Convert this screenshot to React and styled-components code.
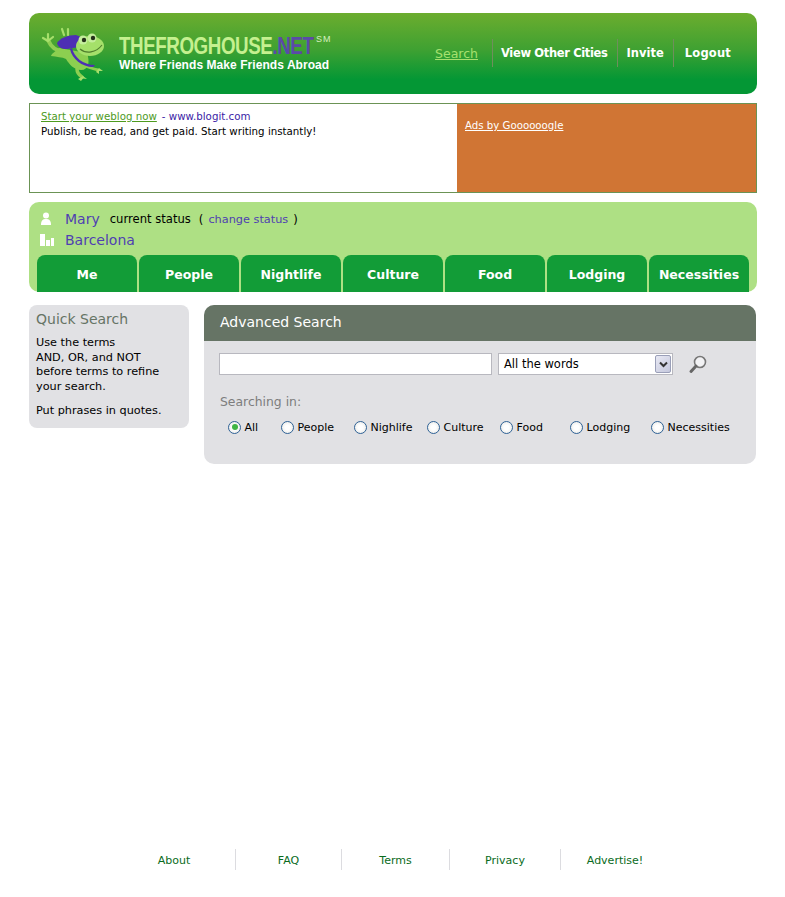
import React from 'react'
import styled, { createGlobalStyle } from 'styled-components'

const GlobalStyle = createGlobalStyle`
  html, body {
    margin: 0;
    padding: 0;
    background: #fff;
    font-family: "DejaVu Sans", Verdana, sans-serif;
    font-size: 11px;
    color: #000;
  }
  a { color: inherit; }
`

const Page = styled.div`
  width: 728px;
  height: 897px;
  margin-left: 29px;
  padding-top: 13px;
  box-sizing: border-box;
  display: flex;
  flex-direction: column;
`

const Header = styled.header`
  height: 81px;
  border-radius: 10px;
  background: linear-gradient(#6cad2e 0%, #3fa132 45%, #049735 82%, #049735 100%);
  display: flex;
  align-items: flex-start;
  justify-content: space-between;
`

const Brand = styled.div`
  display: flex;
  padding: 13px 0 0 12px;
`

const BrandText = styled.div`
  margin: 8px 0 0 10px;
`

const BrandName = styled.div`
  display: flex;
  align-items: flex-start;
  height: 24px;
`

const BrandWord = styled.div`
  width: 194px;
  font-family: "Liberation Sans", Arial, sans-serif;
  font-weight: bold;
  font-size: 23px;
  line-height: 24px;
  letter-spacing: -0.5px;
  color: #c5f08f;
  white-space: nowrap;
  transform: scaleX(0.815);
  transform-origin: left center;
`

const NetPart = styled.span`
  color: #5b4aa8;
`

const Sm = styled.sup`
  font-family: "Liberation Sans", Arial, sans-serif;
  font-weight: normal;
  font-size: 9px;
  line-height: 9px;
  letter-spacing: 1px;
  margin: 1px 0 0 3px;
  color: #d6efc0;
`

const Tagline = styled.div`
  font-family: "Liberation Sans", Arial, sans-serif;
  font-weight: bold;
  font-size: 12px;
  line-height: 14px;
  letter-spacing: 0.06px;
  color: #fff;
`

const TopNav = styled.nav`
  display: flex;
  align-items: center;
  margin: 26px 26px 0 0;
  height: 28px;
`

const TopLink = styled.a`
  height: 28px;
  line-height: 29px;
  font-size: ${p => (p.$active ? '12.5px' : '11.5px')};
  font-weight: ${p => (p.$active ? 'normal' : 'bold')};
  letter-spacing: ${p => p.$ls || 0}px;
  padding: 0 ${p => p.$pr}px 0 ${p => p.$pl}px;
  color: ${p => (p.$active ? '#a6e06f' : '#fff')};
  text-decoration: ${p => (p.$active ? 'underline' : 'none')};
  border-right: ${p => (p.$last ? 'none' : '1px solid #6f8f5c')};
  white-space: nowrap;
`

const AdBox = styled.section`
  margin-top: 9px;
  height: 90px;
  box-sizing: border-box;
  border: 1px solid #6b9355;
  display: flex;
`

const AdText = styled.div`
  width: 427px;
  padding: 5px 0 0 11px;
  box-sizing: border-box;
  line-height: 15px;
  font-size: 10.25px;
`

const AdLink = styled.a`
  color: #4d9a1e;
  text-decoration: underline;
`

const AdUrl = styled.span`
  color: #3a1ca6;
  margin-left: 5px;
`

const AdSide = styled.div`
  flex: 1;
  background: #d07534;
  padding: 14px 0 0 8px;
  font-size: 10.2px;
  line-height: 15px;
  color: #fff;
`

const UserPanel = styled.section`
  margin-top: 9px;
  height: 90px;
  background: #aee084;
  border-radius: 10px;
  box-sizing: border-box;
  padding-top: 6px;
  display: flex;
  flex-direction: column;
`

const UserRow = styled.div`
  height: 21px;
  display: flex;
  align-items: center;
  padding-left: 11px;
  font-size: 11.6px;
`

const RowIcon = styled.svg`
  width: 14px;
  height: 14px;
  margin-right: 11px;
  fill: #fff;
  flex: none;
`

const UserName = styled.a`
  font-size: 14px;
  color: #4f3fb2;
  text-decoration: none;
`

const StatusText = styled.span`
  margin-left: ${p => p.$gap}px;
`

const StatusLink = styled.a`
  color: #4f3fb2;
  font-size: 11.3px;
  text-decoration: none;
  margin: 0 5px;
`

const Tabs = styled.div`
  margin: 5px 0 0 8px;
  display: flex;
  gap: 2px;
`

const Tab = styled.a`
  width: 100px;
  height: 37px;
  background: #129c37;
  border-radius: 8px 8px 0 0;
  color: #fff;
  font-size: 12.5px;
  font-weight: bold;
  text-align: center;
  line-height: 39px;
  text-decoration: none;
  white-space: nowrap;
`

const Columns = styled.div`
  margin-top: 13px;
  display: flex;
  align-items: flex-start;
`

const Sidebar = styled.aside`
  width: 160px;
  height: 123px;
  background: #e1e1e4;
  border-radius: 8px;
  box-sizing: border-box;
  padding: 5px 0 0 7px;
  margin-right: 15px;
`

const SideTitle = styled.h3`
  margin: 0 0 8px;
  font-size: 14px;
  line-height: 18px;
  font-weight: normal;
  color: #667465;
`

const SideText = styled.p`
  margin: 0 0 10px;
  font-size: 11.25px;
  line-height: 14.5px;
`

const Main = styled.main`
  width: 552px;
  height: 159px;
  background: #e1e1e4;
  border-radius: 10px;
  overflow: hidden;
`

const MainTitle = styled.h2`
  margin: 0;
  height: 36px;
  background: #667465;
  color: #fff;
  font-size: 14px;
  font-weight: normal;
  line-height: 34px;
  padding-left: 16px;
`

const SearchRow = styled.div`
  display: flex;
  align-items: center;
  padding: 12px 0 0 15px;
`

const SearchInput = styled.input`
  width: 273px;
  height: 22px;
  box-sizing: border-box;
  border: 1px solid #b8b8bf;
  background: #fff;
  margin: 0;
  padding: 0 4px;
`

const SelectBox = styled.div`
  position: relative;
  width: 175px;
  height: 22px;
  box-sizing: border-box;
  margin-left: 6px;
  border: 1px solid #b8b8bf;
  background: #fff;
  padding-left: 5px;
  font-size: 11.5px;
  line-height: 20px;
`

const SelectArrow = styled.div`
  position: absolute;
  top: 1px;
  right: 1px;
  width: 16px;
  height: 18px;
  box-sizing: border-box;
  border: 1px solid #9a9fb8;
  border-radius: 2px;
  background: linear-gradient(135deg, #e8e9f4, #c4c7dc);
  display: flex;
  align-items: center;
  justify-content: center;
`

const SearchIcon = styled.svg`
  width: 20px;
  height: 20px;
  margin-left: 15px;
`

const SearchingIn = styled.div`
  margin: 19px 0 0 16px;
  font-size: 12.4px;
  line-height: 16px;
  color: #7d7d7d;
`

const RadioRow = styled.div`
  display: flex;
  margin: 9px 0 0 24px;
`

const RadioItem = styled.label`
  width: ${p => p.$w}px;
  height: 16px;
  display: flex;
  align-items: center;
  font-size: 11px;
  white-space: nowrap;
  flex: none;
`

const RadioMark = styled.span`
  width: 13px;
  height: 13px;
  flex: none;
  box-sizing: border-box;
  margin-right: 3.5px;
  border: 1.5px solid #2f6296;
  border-radius: 50%;
  background: radial-gradient(circle at 50% 50%, #fff 30%, #e4e4e0 100%);
  display: flex;
  align-items: center;
  justify-content: center;
  &::after {
    content: '';
    display: ${p => (p.$on ? 'block' : 'none')};
    width: 6px;
    height: 6px;
    border-radius: 50%;
    background: #3fb544;
  }
`

const Footer = styled.footer`
  margin: 385px 0 0 84px;
  display: flex;
  height: 21px;
`

const FootLink = styled.a`
  width: ${p => p.$w}px;
  line-height: 24px;
  text-align: center;
  font-size: 11px;
  color: #0a6b1c;
  text-decoration: none;
  border-right: ${p => (p.$last ? 'none' : '1px solid #dcdce0')};
  flex: none;
`

const Frog = () => (
  <svg width="68" height="60" viewBox="0 0 68 60">
    {/* waving arm */}
    <path d="M22 25 C15 25 10 21 7 14" stroke="#8fce52" strokeWidth="4" fill="none" strokeLinecap="round" />
    <path d="M7 15 L2 12 M7 14 L7 8 M7 15 L12 11" stroke="#a7df6b" strokeWidth="2.2" strokeLinecap="round" />
    {/* body and legs */}
    <path d="M18 22 C14 26 11 27 10 30 C16 31 21 31 25 33 C28 38 33 44 40 44 C48 44 49 36 46 27 Z" fill="#8ccf50" />
    <path d="M36 43 C36 47 38 49 41 51" stroke="#8ccf50" strokeWidth="3.5" fill="none" strokeLinecap="round" />
    <path d="M37 53 L42 50 L46 53 L42 52.5 L40 55 Z" fill="#a7df6b" />
    <path d="M45 40 C49 42 53 43 57 44" stroke="#8ccf50" strokeWidth="3" fill="none" strokeLinecap="round" />
    <path d="M55 46 L58 42 L62 45 L58 45 L58 48 Z" fill="#a7df6b" />
    {/* strap */}
    <path d="M31 22 C33 31 42 39 54 39 L52 41 C41 41 31 33 29 23 Z" fill="#4d2fb4" />
    {/* backpack */}
    <path d="M16 17 C19 12 27 9 35 9 L40 11 L38 21 L26 23 C20 23 17 21 16 17 Z" fill="#4d2fb4" />
    <path d="M21 3 L23 9 M27 3 L27 9" stroke="#a7df6b" strokeWidth="2.2" strokeLinecap="round" />
    {/* head */}
    <ellipse cx="49" cy="20" rx="14" ry="10" fill="#a5e06a" />
    <circle cx="42" cy="14" r="4.5" fill="#c4ee9c" />
    <circle cx="51" cy="12" r="4.5" fill="#c4ee9c" />
    <circle cx="43" cy="14" r="2.2" fill="#24301a" />
    <circle cx="52" cy="12" r="2.2" fill="#24301a" />
    <path d="M39 23 C45 28 55 27 61 19" stroke="#4f7d2c" strokeWidth="1.1" fill="none" />
  </svg>
)

const tabs = ['Me', 'People', 'Nightlife', 'Culture', 'Food', 'Lodging', 'Necessities']

const radios = [
  ['All', 53, true],
  ['People', 73],
  ['Nighlife', 73],
  ['Culture', 73],
  ['Food', 70],
  ['Lodging', 81],
  ['Necessities', 90],
]

const footerLinks = [
  ['About', 122],
  ['FAQ', 105],
  ['Terms', 107],
  ['Privacy', 110],
  ['Advertise!', 108],
]

export default function App() {
  return (
    <Page>
      <GlobalStyle />
      <Header>
        <Brand>
          <Frog />
          <BrandText>
            <BrandName>
              <BrandWord>
                THEFROGHOUSE<NetPart>.NET</NetPart>
              </BrandWord>
              <Sm>SM</Sm>
            </BrandName>
            <Tagline>Where Friends Make Friends Abroad</Tagline>
          </BrandText>
        </Brand>
        <TopNav>
          <TopLink $active $pl={0} $pr={14} href="#">Search</TopLink>
          <TopLink $pl={8} $pr={9} $ls={-0.35} href="#">View Other Cities</TopLink>
          <TopLink $pl={9} $pr={9} href="#">Invite</TopLink>
          <TopLink $pl={11} $pr={0} $ls={0.2} $last href="#">Logout</TopLink>
        </TopNav>
      </Header>

      <AdBox>
        <AdText>
          <AdLink href="#">Start your weblog now</AdLink>
          <AdUrl>- www.blogit.com</AdUrl>
          <br />
          Publish, be read, and get paid. Start writing instantly!
        </AdText>
        <AdSide>
          <a href="#">Ads by Goooooogle</a>
        </AdSide>
      </AdBox>

      <UserPanel>
        <UserRow>
          <RowIcon viewBox="0 0 14 14">
            <circle cx="6" cy="3.5" r="3" />
            <path d="M1 13 C1 8 3 7 6 7 C9 7 11 8 11 13 Z" />
          </RowIcon>
          <UserName href="#">Mary</UserName>
          <StatusText $gap={10}>current status</StatusText>
          <StatusText $gap={8}>(<StatusLink href="#">change status</StatusLink>)</StatusText>
        </UserRow>
        <UserRow>
          <RowIcon viewBox="0 0 14 14">
            <path d="M0 1 H5 V13 H0 Z M6 7 H10 V13 H6 Z M11 5 H15 V13 H11 Z" />
          </RowIcon>
          <UserName href="#">Barcelona</UserName>
        </UserRow>
        <Tabs>
          {tabs.map(t => (
            <Tab key={t} href="#">{t}</Tab>
          ))}
        </Tabs>
      </UserPanel>

      <Columns>
        <Sidebar>
          <SideTitle>Quick Search</SideTitle>
          <SideText>
            Use the terms
            <br />
            AND, OR, and NOT
            <br />
            before terms to refine
            <br />
            your search.
          </SideText>
          <SideText>Put phrases in quotes.</SideText>
        </Sidebar>
        <Main>
          <MainTitle>Advanced Search</MainTitle>
          <SearchRow>
            <SearchInput type="text" />
            <SelectBox>
              All the words
              <SelectArrow>
                <svg width="9" height="7" viewBox="0 0 9 7">
                  <path d="M1 1.5 L4.5 5 L8 1.5" stroke="#333" strokeWidth="2" fill="none" />
                </svg>
              </SelectArrow>
            </SelectBox>
            <SearchIcon viewBox="0 0 20 20">
              <circle cx="12" cy="8" r="5.5" stroke="#777" strokeWidth="1.6" fill="#f2f2f4" />
              <path d="M8 12 L3 17.5" stroke="#666" strokeWidth="3" strokeLinecap="round" />
            </SearchIcon>
          </SearchRow>
          <SearchingIn>Searching in:</SearchingIn>
          <RadioRow>
            {radios.map(([label, w, on]) => (
              <RadioItem key={label} $w={w}>
                <RadioMark $on={on} />
                {label}
              </RadioItem>
            ))}
          </RadioRow>
        </Main>
      </Columns>

      <Footer>
        {footerLinks.map(([label, w], i) => (
          <FootLink key={label} $w={w} $last={i === footerLinks.length - 1} href="#">
            {label}
          </FootLink>
        ))}
      </Footer>
    </Page>
  )
}
